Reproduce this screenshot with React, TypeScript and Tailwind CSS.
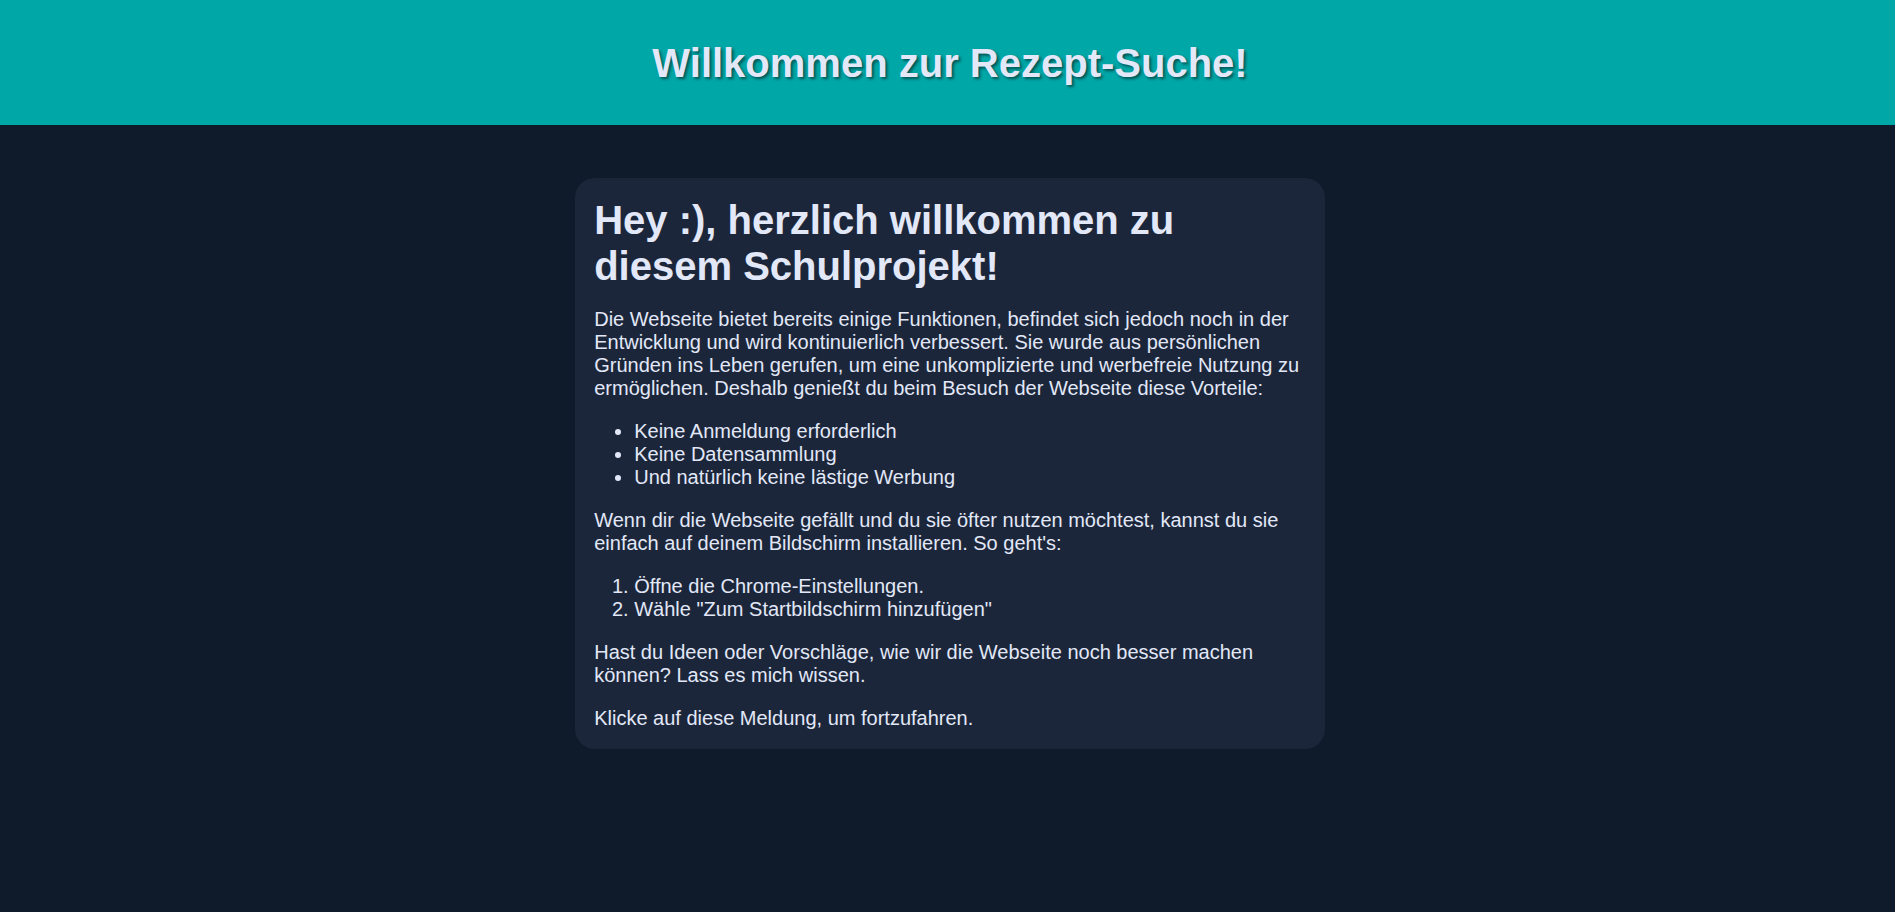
import React from 'react'

export default function App() {
  return (
    <div className="min-h-screen bg-[#0f1a2b] pl-[5px] font-['Liberation_Sans',Arial,sans-serif] text-[#e2e8f8]">
      <header className="-ml-[5px] flex h-[125px] items-center justify-center bg-[#00a7a7] pl-[5px]">
        <h1 className="text-[40px] font-bold [text-shadow:2px_2px_3px_rgba(0,0,0,0.5)]">
          Willkommen zur Rezept-Suche!
        </h1>
      </header>

      <main className="flex justify-center pt-[53px]">
        <div className="w-[750px] cursor-pointer rounded-[20px] bg-[#1c263a] p-[19.2px] text-[20px] leading-[23px]">
          <h2 className="text-[40px] font-bold leading-[46px]">
            Hey :), herzlich willkommen zu diesem Schulprojekt!
          </h2>
          <p className="mt-[19px]">
            Die Webseite bietet bereits einige Funktionen, befindet sich jedoch noch in der Entwicklung und wird
            kontinuierlich verbessert. Sie wurde aus persönlichen Gründen ins Leben gerufen, um eine unkomplizierte
            und werbefreie Nutzung zu ermöglichen. Deshalb genießt du beim Besuch der Webseite diese Vorteile:
          </p>
          <ul className="my-5 list-disc pl-10">
            <li>Keine Anmeldung erforderlich</li>
            <li>Keine Datensammlung</li>
            <li>Und natürlich keine lästige Werbung</li>
          </ul>
          <p>
            Wenn dir die Webseite gefällt und du sie öfter nutzen möchtest, kannst du sie einfach auf deinem
            Bildschirm installieren. So geht's:
          </p>
          <ol className="my-5 list-decimal pl-10">
            <li>Öffne die Chrome-Einstellungen.</li>
            <li>Wähle "Zum Startbildschirm hinzufügen"</li>
          </ol>
          <p>
            Hast du Ideen oder Vorschläge, wie wir die Webseite noch besser machen können? Lass es mich wissen.
          </p>
          <p className="mt-5">Klicke auf diese Meldung, um fortzufahren.</p>
        </div>
      </main>
    </div>
  )
}
